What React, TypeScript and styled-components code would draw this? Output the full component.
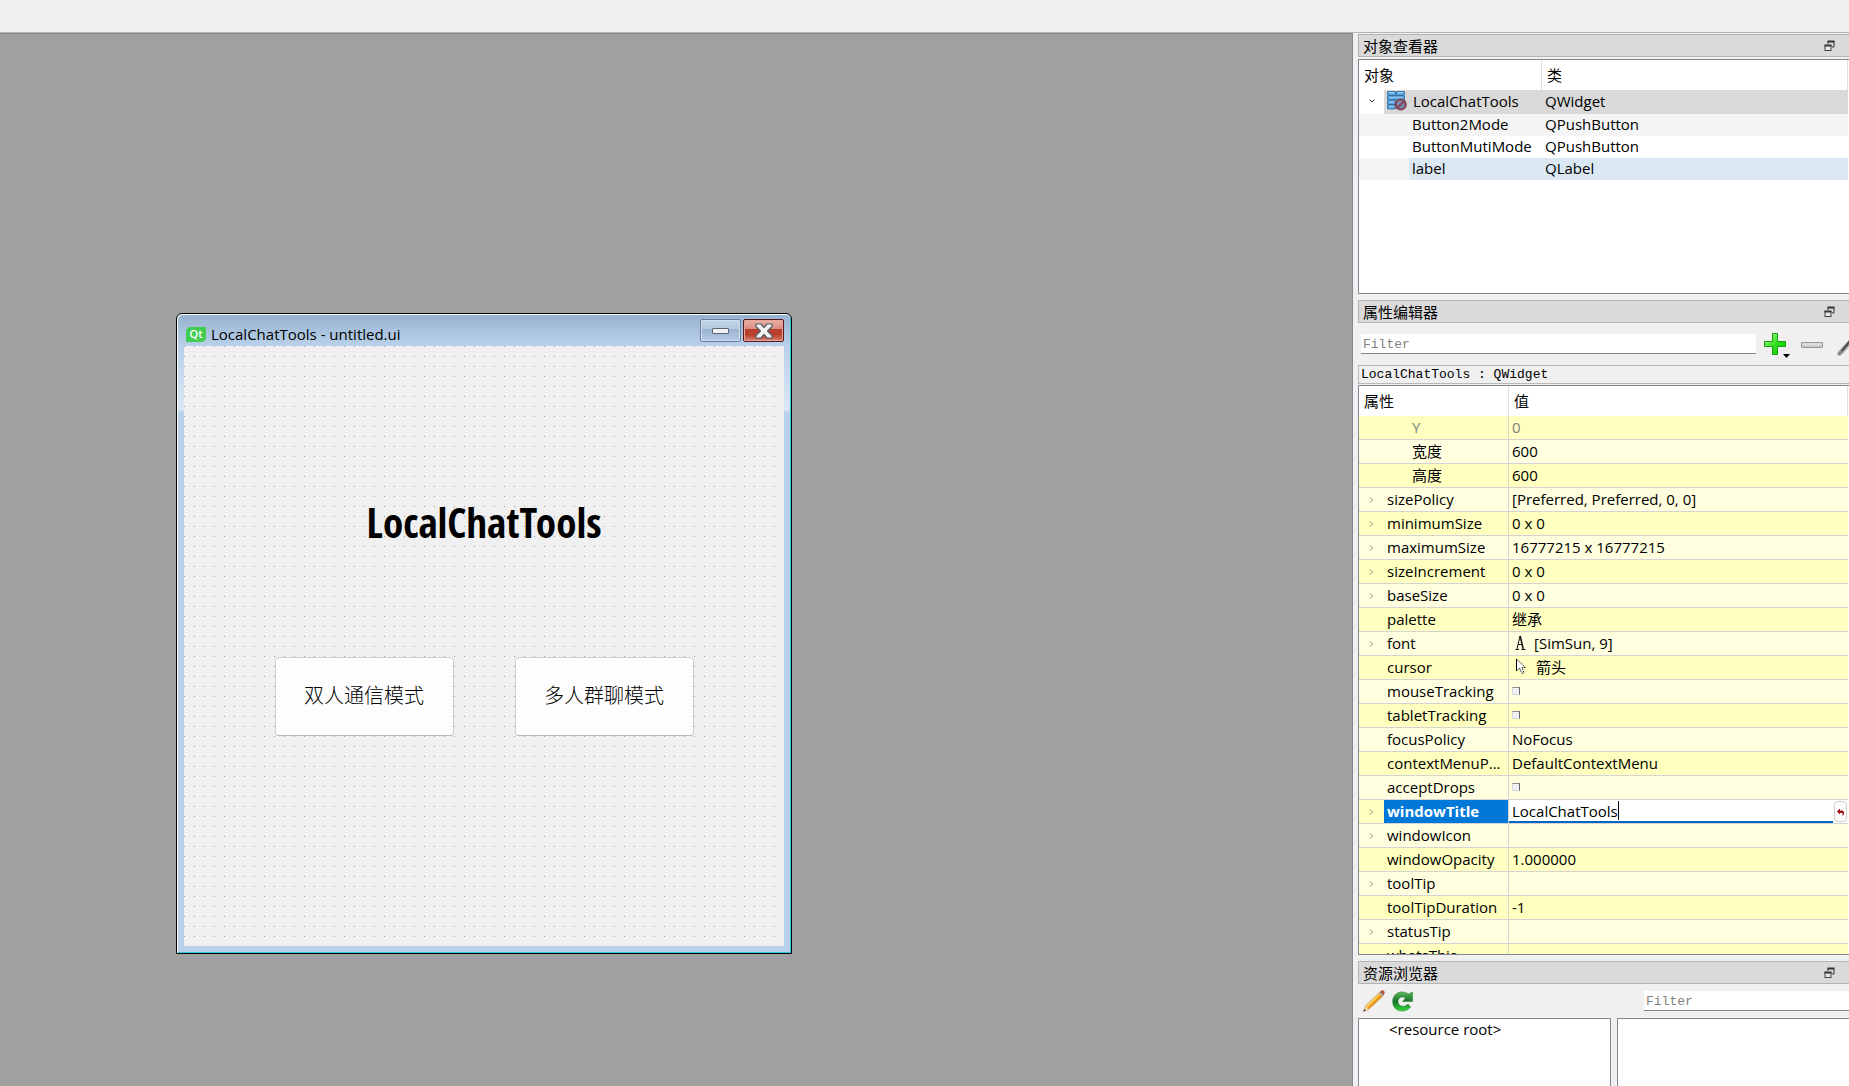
import React from "react";
import styled, { createGlobalStyle, css } from "styled-components";

const ui = `"Open Sans", "Noto Sans CJK SC", sans-serif`;
const mono = `"Liberation Mono", "Noto Sans CJK SC", monospace`;

const GlobalStyle = createGlobalStyle`
  * { box-sizing: border-box; }
  body { margin: 0; background: #f0f0f0; color: #000; font: 15px/20px ${ui}; overflow: hidden; }
  button, input { font: inherit; color: inherit; margin: 0; padding: 0; border: 0; outline: 0; }
  table { border-collapse: separate; border-spacing: 0; table-layout: fixed; width: 100%; }
  th, td { padding: 0; text-align: left; font-weight: 400; white-space: nowrap; }
  svg { display: block; flex: none; }
`;

const Shell = styled.div`
  display: flex;
  flex-direction: column;
  height: 100vh;
`;
const TopBar = styled.header`
  height: 33px;
  flex: none;
  border-bottom: 1px solid #b4b4b4;
`;
const Main = styled.div`
  display: flex;
  flex: 1;
  min-height: 0;
`;
const Workspace = styled.main`
  position: relative;
  flex: 1;
  background: #a0a0a0;
  border-top: 1px solid #828790;
  border-right: 1px solid #828790;
  overflow: hidden;
`;
const Docks = styled.aside`
  display: flex;
  flex-direction: column;
  width: 496px;
  padding: 1px 0 0 5px;
  gap: 6px;
  overflow: hidden;
`;

/* Form window */
const FormWindow = styled.section`
  position: absolute;
  left: 176px;
  top: 279px;
  width: 616px;
  border: 1px solid #000;
  border-radius: 6px 6px 0 0;
  background: linear-gradient(#b9d1ea 32px, #dbe8f5 96px, #b9d1ea 98px);
  box-shadow: inset 1px 1px #fff, inset -1px -1px #35c8dd;
  padding: 1px 6px 7px 7px;
`;
const TitleBar = styled.div`
  display: flex;
  align-items: center;
  height: 31px;
  margin: 0 -5px 0 -6px;
  padding: 0 6px 0 8px;
  border-radius: 5px 5px 0 0;
  background: linear-gradient(#98b3d0, #b9d1ea);
`;
const WindowTitle = styled.h1`
  flex: 1;
  margin: 0 0 0 5px;
  font: inherit;
  padding-top: 6px;
`;
const QtMark = styled.svg`
  margin-top: 8px;
`;
const WinButton = styled.button<{ $close?: boolean }>`
  display: flex;
  align-items: center;
  justify-content: center;
  width: 41px;
  height: 23px;
  margin-left: 2px;
  border: 1px solid ${(p) => (p.$close ? "#5a1720" : "#6b7f9c")};
  border-radius: 2px;
  box-shadow: inset 0 0 0 1px ${(p) => (p.$close ? "#e8a79c" : "#cfdfef")};
  background: ${(p) =>
    p.$close
      ? "linear-gradient(#eab0a3, #d98c7e 44%, #b8402a 45%, #b8402a 70%, #d68373)"
      : "linear-gradient(#c3d5e8, #b3c9e0 44%, #9ab3ce 45%, #b5cce5)"};
`;
const Canvas = styled.div`
  display: flex;
  flex-direction: column;
  align-items: center;
  width: 600px;
  height: 600px;
  background: conic-gradient(from 270deg at 1px 1px, #9c9c9c 90deg, #f0f0f0 0) 0 0 / 10px 10px;
`;
const Heading = styled.h2`
  margin: 141px 0 0;
  font: 700 41px/70px "Open Sans Condensed", "Liberation Sans Narrow", "Roboto Condensed", "Liberation Sans", sans-serif;
`;
const FormButtons = styled.div`
  display: flex;
  gap: 61px;
  margin-top: 100px;
`;
const PushButton = styled.button`
  width: 179px;
  height: 79px;
  padding-bottom: 4px;
  border: 1px solid #d0d0d0;
  border-bottom-color: #b8b8b8;
  border-radius: 4px;
  background: #fdfdfd;
  font: 300 20px/26px "Noto Sans CJK SC", sans-serif;
`;

/* Docks */
const Dock = styled.section<{ $grow?: boolean; $height?: number }>`
  display: flex;
  flex-direction: column;
  min-height: 0;
  ${(p) => (p.$grow ? "flex: 1;" : `flex: none; height: ${p.$height}px;`)}
`;
const DockTitle = styled.div`
  display: flex;
  align-items: center;
  justify-content: space-between;
  flex: none;
  height: 23px;
  padding: 0 14px 0 4px;
  border: 1px solid #b4b4b4;
  border-right: 0;
  background: #dadada;
`;
const DockName = styled.h2`
  margin: 0;
  font: inherit;
`;
const IconButton = styled.button`
  display: flex;
  align-items: center;
  background: none;
`;
const View = styled.div<{ $gap?: number }>`
  flex: 1;
  min-height: 0;
  margin-top: ${(p) => p.$gap ?? 0}px;
  border: 1px solid #828790;
  border-right: 0;
  padding-right: 1px;
  background: #fff;
  overflow: hidden;
`;
const HeadCell = styled.th`
  height: 30px;
  padding: 0 0 0 5px;
  border-right: 1px solid #e0e0e0;
`;
const Centered = styled.span`
  display: flex;
  justify-content: center;
  padding-right: 2px;
`;

const ObjectRow = styled.tr<{ $tone?: "selected" | "stripe" | "hover" }>`
  td {
    height: 22px;
    line-height: 20px;
    padding: 0 0 2px 3px;
    background: ${(p) => (p.$tone && p.$tone !== "selected" ? "#f5f5f5" : "#fff")};
  }
  td:nth-child(2) { padding: 0; }
  ${(p) =>
    p.$tone === "selected" &&
    css`
      td { height: 24px; }
      td + td { background: #d9d9d9; }
    `}
  ${(p) =>
    p.$tone === "hover" &&
    css`
      td:nth-child(3) { background: #dbe8f4; }
    `}
`;
const ObjectName = styled.div<{ $root?: boolean; $hover?: boolean }>`
  display: flex;
  align-items: center;
  gap: 6px;
  margin-left: ${(p) => (p.$root ? 0 : 25)}px;
  padding: 0 0 2px 3px;
  background: ${(p) => (p.$hover ? "#dbe8f4" : "transparent")};
`;

const Toolbar = styled.div`
  display: flex;
  align-items: center;
  flex: none;
  height: 42px;
  padding-left: 3px;
  gap: 8px;
`;
const PropertyActions = styled.div`
  display: flex;
  align-items: center;
  flex: none;
  width: 85px;
  gap: 10px;
  padding-top: 2px;
`;
const ResourceBar = styled.div`
  display: flex;
  align-items: center;
  flex: none;
  height: 34px;
  padding-left: 5px;
  gap: 7px;
`;
const FilterInput = styled.input<{ $fixed?: boolean }>`
  ${(p) => (p.$fixed ? "width: 205px; margin-left: auto;" : "flex: 1; min-width: 0;")}
  height: 20px;
  padding: 2px 0 0 2px;
  border-bottom: 1px solid #868686;
  background: #fff;
  font: 13px/17px ${mono};
  &::placeholder { color: #808080; opacity: 1; }
`;
const ObjectInfo = styled.div`
  flex: none;
  height: 19px;
  padding-left: 2px;
  border: 1px solid #b8b8b8;
  border-right: 0;
  font: 13px/18px ${mono};
`;

const PropertyRow = styled.tr<{ $strong: boolean; $muted?: boolean; $selected?: boolean }>`
  color: ${(p) => (p.$muted ? "#808080" : "#000")};
  background: ${(p) => (p.$strong ? "#ffffbf" : "#ffffdf")};
  td {
    height: 24px;
    line-height: 20px;
    border-bottom: 1px solid #d4d4d4;
    padding: 0 0 2px 3px;
  }
  td:first-child { padding: 0; }
  td:nth-child(2) {
    border-right: 1px solid #d4d4d4;
    ${(p) => p.$selected && "background: #0078d7; color: #fff; font-weight: 700;"}
  }
  ${(p) => p.$selected && "td:nth-child(3) { padding: 0; }"}
`;
const PropertyName = styled.span<{ $child?: boolean }>`
  padding-left: ${(p) => (p.$child ? 25 : 0)}px;
`;
const IconValue = styled.span<{ $gap: number }>`
  display: flex;
  align-items: center;
  gap: ${(p) => p.$gap}px;
  padding-left: 3px;
`;
const Check = styled.input`
  display: block;
  appearance: none;
  width: 8px;
  height: 8px;
  border: 1px solid #d8d8d4;
  border-top-color: #85858a;
  border-right-color: #66666c;
  background: #f3f1f6;
`;
const Editor = styled.div`
  display: flex;
  align-items: center;
  height: 23px;
  background: #fdfdf8;
  gap: 1px;
  padding-right: 1px;
`;
const EditorField = styled.label`
  display: flex;
  align-items: center;
  flex: 1;
  height: 23px;
  padding-left: 3px;
  border-bottom: 2px solid #0067c0;
  background: #fff;
`;
const EditorInput = styled.input`
  field-sizing: content;
  background: none;
  caret-color: transparent;
`;
const Caret = styled.span`
  width: 1px;
  height: 19px;
  background: #000;
`;
const ResetButton = styled.button`
  display: flex;
  align-items: center;
  justify-content: center;
  width: 13px;
  height: 21px;
  border: 1px solid #d0d0d0;
  border-radius: 4px;
  background: #fdfdfd;
`;
const Split = styled.div`
  display: grid;
  grid-template-columns: 253px 1fr;
  gap: 6px;
  flex: 1;
  min-height: 0;
`;
const Pane = styled.div<{ $closed?: boolean }>`
  border: 1px solid #828790;
  border-bottom: 0;
  ${(p) => !p.$closed && "border-right: 0;"}
  background: #fff;
  padding-left: 30px;
`;

const Chevron = ({ open }: { open?: boolean }) => (
  <Centered>
    <svg width="8" height="8" viewBox="0 0 8 8" fill="none" stroke={open ? "#333" : "#8a8a80"} strokeWidth="1">
      <path d={open ? "M1.5 2.5 4 5l2.5-2.5" : "M3 1.5 5.5 4 3 6.5"} />
    </svg>
  </Centered>
);

const FloatIcon = () => (
  <svg width="11" height="12" viewBox="0 0 11 12" fill="none">
    <path d="M4 4V1.5h6V7H8" stroke="#333" />
    <path d="M3.5 1.5h7" stroke="#333" strokeWidth="2" />
    <rect x="1" y="5.5" width="6" height="5" fill="#e6e6e6" stroke="#444" />
    <path d="M.5 5.5h7" stroke="#333" strokeWidth="2" />
  </svg>
);

const WidgetIcon = () => (
  <svg width="20" height="20" viewBox="0 0 20 20">
    <g fill="#5aa9e6" stroke="#27608f" strokeWidth=".8">
      <rect x=".5" y=".5" width="8" height="4" rx=".6" />
      <rect x="9" y=".5" width="8.5" height="4" rx=".6" />
      <rect x=".5" y="5" width="17" height="4" rx=".6" />
      <rect x=".5" y="9.500" width="8" height="4" rx=".6" />
      <rect x=".5" y="14" width="8" height="4" rx=".6" />
    </g>
    <path d="M2 1.700h5M10.500 1.700H16M2 6.200h14M2 10.700h5M2 15.200h5" stroke="#a9d8fa" />
    <circle cx="13.700" cy="13.500" r="5" fill="#7491b8" stroke="#854355" strokeWidth="2.200" />
    <path d="m10.500 16.700 6.500-6.500" stroke="#854355" strokeWidth="2.200" />
  </svg>
);

const PlusIcon = () => (
  <svg width="27" height="26" viewBox="0 0 27 26">
    <defs>
      <linearGradient id="plus" x1="0" y1="0" x2="1" y2="1">
        <stop offset="0" stopColor="#b9ff9e" />
        <stop offset=".5" stopColor="#35dd22" />
        <stop offset="1" stopColor="#00c400" />
      </linearGradient>
    </defs>
    <path d="M8.500 1.500h5v8h8v5h-8v8h-5v-8h-8v-5h8z" fill="url(#plus)" stroke="#12a40c" strokeLinejoin="round" />
    <path d="M19 22h7l-3.500 4z" fill="#000" />
  </svg>
);

const MinusIcon = () => (
  <svg width="22" height="8" viewBox="0 0 22 8">
    <rect x=".5" y="1.500" width="21" height="5" rx=".5" fill="#d0d0d0" stroke="#959595" />
    <path d="M1.500 3h19" stroke="#ededed" />
  </svg>
);

const WrenchIcon = () => (
  <svg width="22" height="22" viewBox="0 0 22 22" fill="none" strokeLinecap="round">
    <path d="m7 19 12-13" stroke="#bdbdbd" strokeWidth="5" />
    <path d="m8 18 11-13" stroke="#505050" strokeWidth="2.500" />
    <path d="m6 20 2-2" stroke="#888" strokeWidth="3" />
  </svg>
);

const PencilIcon = () => (
  <svg width="22" height="22" viewBox="0 0 22 22">
    <path d="M.5 21.500 2.500 16 17 2l3.500 3.500L6 19z" fill="#e99a1c" stroke="#b87920" strokeWidth=".6" />
    <path d="M3 16 17 2.300l1.300 1.300L4.300 17.500z" fill="#ffd367" />
    <path d="M.5 21.500 2.500 16 6 19z" fill="#ead1a0" />
    <path d="m.5 21.500.8-2.300 1.500 1.400z" fill="#333" />
    <path d="m15.700 3.300 1.800-1.800 3.500 3.500-1.800 1.800z" fill="#a9b3b8" />
    <path d="M17 2c1.500-2 3-2 4-1s1 2.500-.5 4z" fill="#b5523b" />
  </svg>
);

const ReloadIcon = () => (
  <svg width="21" height="21" viewBox="0 0 21 21">
    <defs>
      <linearGradient id="reload" x1="0" y1="0" x2="0" y2="1">
        <stop offset="0" stopColor="#5cb85a" />
        <stop offset=".5" stopColor="#14722a" />
        <stop offset="1" stopColor="#35dd3a" />
      </linearGradient>
    </defs>
    <path
      d="M16.500 3 20.500 1v9.500h-10l3-3.500C10 4.500 6 7 6 10.500c0 5 6.500 6.500 10 2.500l2.500 3C14 22.500.7 21.500.7 10.500.7 1.500 10-1.500 16.500 3z"
      fill="url(#reload)"
      stroke="#2c8a37"
      strokeWidth=".6"
    />
  </svg>
);

const CursorIcon = () => (
  <svg width="12" height="17" viewBox="0 0 12 17">
    <path d="M1.500 1v12l3-3 2.500 5.500 2-1L6.800 9.500h3.700z" fill="#fff" stroke="#222" strokeWidth=".9" strokeDasharray="2 .7" />
    <path d="M1.500 1v12" stroke="#000" />
  </svg>
);

const FontIcon = () => (
  <svg width="12" height="17" viewBox="0 0 12 17" fill="none" stroke="#111">
    <path d="M.5 15.500H4M6.500 15.500h4M2 15 5 2M3.200 10.500h4" />
    <path d="m5.200 2 3 13" strokeWidth="1.500" />
  </svg>
);

interface Property {
  name: string;
  value?: string;
  kind?: "check" | "font" | "cursor" | "edit";
  expand?: boolean;
  child?: boolean;
  muted?: boolean;
}

const properties: Property[] = [
  { name: "Y", value: "0", child: true, muted: true },
  { name: "宽度", value: "600", child: true },
  { name: "高度", value: "600", child: true },
  { name: "sizePolicy", value: "[Preferred, Preferred, 0, 0]", expand: true },
  { name: "minimumSize", value: "0 x 0", expand: true },
  { name: "maximumSize", value: "16777215 x 16777215", expand: true },
  { name: "sizeIncrement", value: "0 x 0", expand: true },
  { name: "baseSize", value: "0 x 0", expand: true },
  { name: "palette", value: "继承" },
  { name: "font", value: "[SimSun, 9]", kind: "font", expand: true },
  { name: "cursor", value: "箭头", kind: "cursor" },
  { name: "mouseTracking", kind: "check" },
  { name: "tabletTracking", kind: "check" },
  { name: "focusPolicy", value: "NoFocus" },
  { name: "contextMenuP...", value: "DefaultContextMenu" },
  { name: "acceptDrops", kind: "check" },
  { name: "windowTitle", value: "LocalChatTools", kind: "edit", expand: true },
  { name: "windowIcon", expand: true },
  { name: "windowOpacity", value: "1.000000" },
  { name: "toolTip", expand: true },
  { name: "toolTipDuration", value: "-1" },
  { name: "statusTip", expand: true },
  { name: "whatsThis" },
];

const PropertyValue = ({ item }: { item: Property }) => {
  switch (item.kind) {
    case "check":
      return <Check type="checkbox" aria-label={item.name} />;
    case "font":
      return <IconValue $gap={7}><FontIcon />{item.value}</IconValue>;
    case "cursor":
      return <IconValue $gap={9}><CursorIcon />{item.value}</IconValue>;
    case "edit":
      return (
        <Editor>
          <EditorField>
            <EditorInput aria-label={item.name} defaultValue={item.value} />
            <Caret />
          </EditorField>
          <ResetButton aria-label="Reset">
            <svg width="7" height="8" viewBox="0 0 7 8">
              <path d="M0 3.500 3 .5v2h2.500L7 4v2.500L5.500 8V5H3v1.500z" fill="#a01018" />
            </svg>
          </ResetButton>
        </Editor>
      );
    default:
      return <>{item.value}</>;
  }
};

const DockHeader = ({ title }: { title: string }) => (
  <DockTitle>
    <DockName>{title}</DockName>
    <IconButton aria-label="Float"><FloatIcon /></IconButton>
  </DockTitle>
);

export default function App() {
  return (
    <Shell>
      <GlobalStyle />
      <TopBar />
      <Main>
        <Workspace>
          <FormWindow>
            <TitleBar>
              <QtMark width="20" height="15" viewBox="0 0 20 15">
                <path d="M3 0h17v12l-3 3H0V3z" fill="#41cd52" />
                <text x="10" y="11" textAnchor="middle" fontFamily="Open Sans, sans-serif" fontSize="11" fontWeight="600" fill="#fff">Qt</text>
              </QtMark>
              <WindowTitle>LocalChatTools - untitled.ui</WindowTitle>
              <WinButton aria-label="Minimize">
                <svg width="17" height="7" viewBox="0 0 17 7">
                  <rect x=".5" y="1.500" width="16" height="5" rx=".5" fill="#f2f2f2" stroke="#5a6270" />
                </svg>
              </WinButton>
              <WinButton $close aria-label="Close">
                <svg width="18" height="16" viewBox="0 0 18 16">
                  <path
                    d="M1 1h5l3 3.500L12 1h5v2.500L12.500 8l4.500 4.500V15h-5l-3-3.500L6 15H1v-2.500L5.500 8 1 3.500z"
                    fill="#f4f4f4"
                    stroke="#555b6b"
                    strokeLinejoin="round"
                    strokeWidth="1.200"
                  />
                </svg>
              </WinButton>
            </TitleBar>
            <Canvas>
              <Heading>LocalChatTools</Heading>
              <FormButtons>
                <PushButton>双人通信模式</PushButton>
                <PushButton>多人群聊模式</PushButton>
              </FormButtons>
            </Canvas>
          </FormWindow>
        </Workspace>

        <Docks>
          <Dock $height={260}>
            <DockHeader title="对象查看器" />
            <View $gap={2}>
              <table>
                <colgroup>
                  <col style={{ width: 25 }} />
                  <col style={{ width: 158 }} />
                  <col />
                </colgroup>
                <thead>
                  <tr>
                    <HeadCell colSpan={2}>对象</HeadCell>
                    <HeadCell>类</HeadCell>
                  </tr>
                </thead>
                <tbody>
                  <ObjectRow $tone="selected">
                    <td><Chevron open /></td>
                    <td><ObjectName $root><WidgetIcon />LocalChatTools</ObjectName></td>
                    <td>QWidget</td>
                  </ObjectRow>
                  <ObjectRow $tone="stripe">
                    <td />
                    <td><ObjectName>Button2Mode</ObjectName></td>
                    <td>QPushButton</td>
                  </ObjectRow>
                  <ObjectRow>
                    <td />
                    <td><ObjectName>ButtonMutiMode</ObjectName></td>
                    <td>QPushButton</td>
                  </ObjectRow>
                  <ObjectRow $tone="hover">
                    <td />
                    <td><ObjectName $hover>label</ObjectName></td>
                    <td>QLabel</td>
                  </ObjectRow>
                </tbody>
              </table>
            </View>
          </Dock>

          <Dock $grow>
            <DockHeader title="属性编辑器" />
            <Toolbar>
              <FilterInput placeholder="Filter" aria-label="Filter properties" />
              <PropertyActions>
                <IconButton aria-label="Add property"><PlusIcon /></IconButton>
                <IconButton aria-label="Remove property"><MinusIcon /></IconButton>
                <IconButton aria-label="Configure"><WrenchIcon /></IconButton>
              </PropertyActions>
            </Toolbar>
            <ObjectInfo>LocalChatTools : QWidget</ObjectInfo>
            <View $gap={1}>
              <table>
                <colgroup>
                  <col style={{ width: 25 }} />
                  <col style={{ width: 125 }} />
                  <col />
                </colgroup>
                <thead>
                  <tr>
                    <HeadCell colSpan={2}>属性</HeadCell>
                    <HeadCell>值</HeadCell>
                  </tr>
                </thead>
                <tbody>
                  {properties.map((item, i) => (
                    <PropertyRow key={item.name} $strong={i % 2 === 0} $muted={item.muted} $selected={item.kind === "edit"}>
                      <td>{item.expand && <Chevron />}</td>
                      <td><PropertyName $child={item.child}>{item.name}</PropertyName></td>
                      <td><PropertyValue item={item} /></td>
                    </PropertyRow>
                  ))}
                </tbody>
              </table>
            </View>
          </Dock>

          <Dock $height={125}>
            <DockHeader title="资源浏览器" />
            <ResourceBar>
              <IconButton aria-label="Edit resources"><PencilIcon /></IconButton>
              <IconButton aria-label="Reload"><ReloadIcon /></IconButton>
              <FilterInput $fixed placeholder="Filter" aria-label="Filter resources" />
            </ResourceBar>
            <Split>
              <Pane $closed>&lt;resource root&gt;</Pane>
              <Pane />
            </Split>
          </Dock>
        </Docks>
      </Main>
    </Shell>
  );
}
